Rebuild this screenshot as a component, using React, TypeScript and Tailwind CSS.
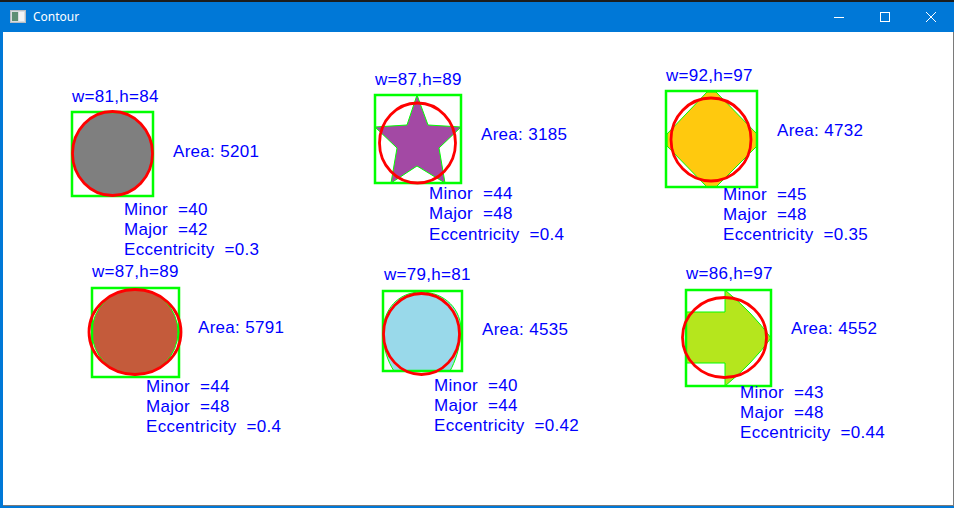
const BLUE = "#0000ff";

type Label = { x: number; y: number; text: string };

const labels: Label[] = [
  { x: 72, y: 102, text: "w=81,h=84" },
  { x: 173, y: 157, text: "Area: 5201" },
  { x: 124, y: 215, text: "Minor  =40" },
  { x: 124, y: 235, text: "Major  =42" },
  { x: 124, y: 255, text: "Eccentricity  =0.3" },

  { x: 375, y: 85, text: "w=87,h=89" },
  { x: 481, y: 140, text: "Area: 3185" },
  { x: 429, y: 199, text: "Minor  =44" },
  { x: 429, y: 219, text: "Major  =48" },
  { x: 429, y: 240, text: "Eccentricity  =0.4" },

  { x: 666, y: 81, text: "w=92,h=97" },
  { x: 777, y: 136, text: "Area: 4732" },
  { x: 723, y: 200, text: "Minor  =45" },
  { x: 723, y: 220, text: "Major  =48" },
  { x: 723, y: 240, text: "Eccentricity  =0.35" },

  { x: 92, y: 277, text: "w=87,h=89" },
  { x: 198, y: 333, text: "Area: 5791" },
  { x: 146, y: 392, text: "Minor  =44" },
  { x: 146, y: 412, text: "Major  =48" },
  { x: 146, y: 432, text: "Eccentricity  =0.4" },

  { x: 384, y: 280, text: "w=79,h=81" },
  { x: 482, y: 335, text: "Area: 4535" },
  { x: 434, y: 391, text: "Minor  =40" },
  { x: 434, y: 411, text: "Major  =44" },
  { x: 434, y: 431, text: "Eccentricity  =0.42" },

  { x: 686, y: 279, text: "w=86,h=97" },
  { x: 791, y: 334, text: "Area: 4552" },
  { x: 740, y: 398, text: "Minor  =43" },
  { x: 740, y: 418, text: "Major  =48" },
  { x: 740, y: 438, text: "Eccentricity  =0.44" },
];

const rects = [
  { x: 72, y: 112, w: 81, h: 84 },
  { x: 375, y: 95, w: 86, h: 88 },
  { x: 666, y: 91, w: 91, h: 96 },
  { x: 92, y: 288, w: 87, h: 89 },
  { x: 383, y: 291, w: 79, h: 80 },
  { x: 686, y: 290, w: 85, h: 96 },
];

const ellipses = [
  { cx: 112.5, cy: 153.5, rx: 40, ry: 42 },
  { cx: 417.5, cy: 143, rx: 38, ry: 40 },
  { cx: 711, cy: 139.5, rx: 40, ry: 41.5 },
  { cx: 135, cy: 332, rx: 46, ry: 42.5 },
  { cx: 421.5, cy: 334, rx: 38, ry: 40.5 },
  { cx: 724.5, cy: 337.5, rx: 42, ry: 40 },
];

function Canvas() {
  return (
    <svg width={950} height={473} viewBox="3 32 950 473" className="block">
      {/* shapes */}
      <ellipse cx={112.5} cy={153.5} rx={40} ry={41.5} fill="#7f7f7f" />
      <polygon
        points="417,95 428,125 461,127 439,148 445,183 417,166 391,183 397,148 375,127 407,125"
        fill="#a349a4"
        stroke="#00ff00"
        strokeWidth={1}
      />
      <path
        d="M707 92 L716 92 L757 134 L757 146 L716 187 L707 187 L667 146 L667 134 Z"
        fill="#ffc90e"
        stroke="#00ff00"
        strokeWidth={1}
      />
      <ellipse cx={135} cy={332} rx={43} ry={43} fill="#c45b3b" stroke="#00ff00" strokeWidth={1} />
      <path
        d="M421 292 C445 292 462 310 461 332 C460 348 455 362 450 371 L394 371 C388 362 383 348 383 332 C383 310 398 292 421 292 Z"
        fill="#99d9ea"
        stroke="#00ff00"
        strokeWidth={1}
      />
      <path
        d="M686 312 L725 312 L725 290 Q752 312 771 338 Q752 364 725 386 L725 363 L686 363 Z"
        fill="#b5e61d"
        stroke="#00ff00"
        strokeWidth={1}
      />

      {rects.map((r, i) => (
        <rect key={i} x={r.x} y={r.y} width={r.w} height={r.h} fill="none" stroke="#00ff00" strokeWidth={2.5} />
      ))}
      {ellipses.map((e, i) => (
        <ellipse key={i} cx={e.cx} cy={e.cy} rx={e.rx} ry={e.ry} fill="none" stroke="#ff0000" strokeWidth={2.8} />
      ))}

      {labels.map((l, i) => (
        <text
          key={i}
          x={l.x}
          y={l.y}
          fill={BLUE}
          fontSize={17}
          letterSpacing={0.3}
          style={{ fontFamily: '"Liberation Sans", Arial, sans-serif', whiteSpace: "pre" }}
        >
          {l.text}
        </text>
      ))}
    </svg>
  );
}

export default function App() {
  return (
    <div className="flex h-[508px] w-[954px] flex-col overflow-hidden bg-[#0078d7]">
      <div className="h-[2px] bg-[#1c1c1c]" />
      <div className="flex h-[30px] items-center text-white">
        <svg width={16} height={14} viewBox="0 0 16 14" className="ml-[10px]">
          <rect x={0.5} y={0.5} width={15} height={12} fill="#d9dde0" stroke="#b8bec4" />
          <rect x={2} y={2} width={6} height={9} fill="#5e8f74" />
          <rect x={9} y={2} width={5} height={9} fill="#f2f4f5" />
        </svg>
        <span className="ml-[7px] text-[12px] leading-none font-['Noto_Sans',sans-serif]">Contour</span>
        <div className="ml-auto flex h-full items-center">
          <div className="flex h-full w-[46px] items-center justify-center">
            <svg width={10} height={10} viewBox="0 0 10 10">
              <line x1={0} y1={5.5} x2={10} y2={5.5} stroke="white" strokeWidth={1} />
            </svg>
          </div>
          <div className="flex h-full w-[46px] items-center justify-center">
            <svg width={10} height={10} viewBox="0 0 10 10">
              <rect x={0.5} y={0.5} width={9} height={9} fill="none" stroke="white" strokeWidth={1} />
            </svg>
          </div>
          <div className="flex h-full w-[46px] items-center justify-center">
            <svg width={10} height={10} viewBox="0 0 10 10">
              <path d="M0 0 L10 10 M10 0 L0 10" stroke="white" strokeWidth={1} />
            </svg>
          </div>
        </div>
      </div>
      <div className="mb-[2px] ml-[3px] flex-1 border-r border-b border-[#7a7a7a] bg-white">
        <Canvas />
      </div>
    </div>
  );
}
